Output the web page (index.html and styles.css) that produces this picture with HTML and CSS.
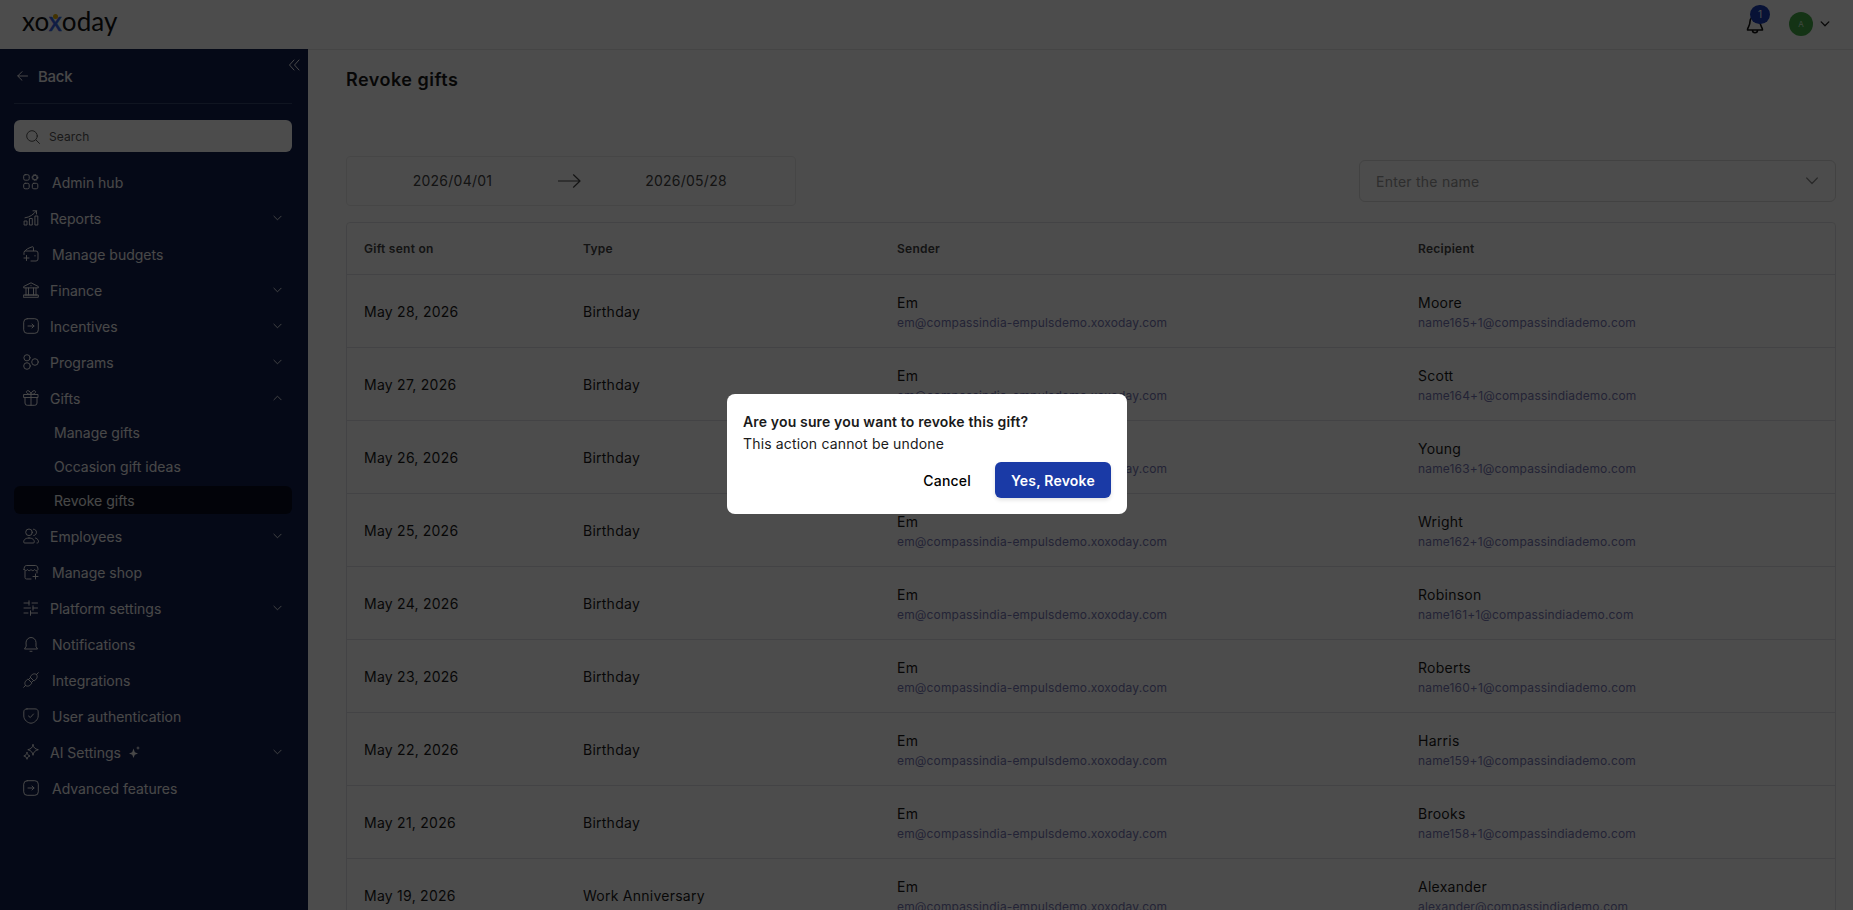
FILE: index.html
```
<!DOCTYPE html>
<html lang="en">
<head>
    <meta charset="UTF-8">
    <meta name="viewport" content="width=device-width, initial-scale=1.0">
    <title>Revoke gifts</title>
    <link rel="stylesheet" href="styles.css">
</head>
<body>
    <header class="topbar">
        <div class="logo">xo<span class="logo-x">x</span>oday</div>
        <div class="topbar-right">
            <div class="bell">
                <svg width="18" height="20" viewBox="0 0 18 20"><path d="M4 7.500a5 5 0 0 1 10 0c0 5 2.500 5.500 2.500 8.500h-15C1.500 13 4 12.500 4 7.500zM6.500 16.500a2.500 2.200 0 0 0 5 0" stroke-width="1.600"/></svg>
                <span class="badge">1</span>
            </div>
            <div class="avatar">A</div>
            <svg class="chev-user" width="10" height="6" viewBox="0 0 10 6"><path d="M1.200 .9 5 4.700 8.800 .9" stroke-width="1.300"/></svg>
        </div>
    </header>
    <div class="layout">
        <aside class="sidebar">
            <svg class="collapse" width="12" height="12" viewBox="0 0 12 12"><path d="M6 1 1.500 6 6 11M11 1 6.500 6 11 11"/></svg>
            <a class="back"><svg width="11" height="10" viewBox="0 0 11 10"><path d="M10.500 5H1M5 .7.7 5 5 9.300"/></svg><span>Back</span></a>
            <div class="search">
                <svg width="14" height="14" viewBox="0 0 14 14"><circle cx="6" cy="6" r="5.300"/><path d="m10 10 3.500 3.500"/></svg>
                <span>Search</span>
            </div>
            <nav class="menu" id="menu"></nav>
        </aside>
        <main class="content">
            <h1>Revoke gifts</h1>
            <div class="filters">
                <div class="date-range">
                    <span>2026/04/01</span>
                    <svg width="23" height="14" viewBox="0 0 23 14"><path d="M.5 7H22M15.500 .8 22 7l-6.500 6.200" stroke-width="1.200"/></svg>
                    <span>2026/05/28</span>
                </div>
                <div class="name-select">
                    <span>Enter the name</span>
                    <svg width="12" height="8" viewBox="0 0 12 8"><path d="M.7 1 6 6.500 11.300 1" stroke-width="1.200"/></svg>
                </div>
            </div>
            <table class="gift-table">
                <thead>
                    <tr>
                        <th class="col-date">Gift sent on</th>
                        <th class="col-type">Type</th>
                        <th class="col-sender">Sender</th>
                        <th>Recipient</th>
                    </tr>
                </thead>
                <tbody id="giftRows"></tbody>
            </table>
        </main>
    </div>
    <div class="overlay">
        <div class="modal">
            <h2>Are you sure you want to revoke this gift?</h2>
            <p>This action cannot be undone</p>
            <div class="modal-actions">
                <button class="btn-cancel">Cancel</button>
                <button class="btn-revoke">Yes, Revoke</button>
            </div>
        </div>
    </div>
    <script src="script.js"></script>
</body>
</html>
```

FILE: styles.css
```
* {
    box-sizing: border-box;
}

body {
    margin: 0;
    height: 100vh;
    overflow: hidden;
    background-color: #fff;
    color: #1a1a1a;
    font-family: Inter, sans-serif;
    font-size: 14px;
}

svg {
    display: block;
    flex: none;
    fill: none;
    stroke: currentColor;
    stroke-linecap: round;
    stroke-linejoin: round;
}

.topbar {
    display: flex;
    justify-content: space-between;
    align-items: center;
    height: 49px;
    padding: 0 23px 0 22px;
}

.logo {
    font-family: Lato, sans-serif;
    font-size: 26px;
    line-height: 40px;
    letter-spacing: 0.1px;
    padding-bottom: 8px;
    color: #111;
}

.logo-x {
    position: relative;
    color: #3762e4;
    -webkit-text-stroke: 0.5px #3762e4;
}

.logo-x::after {
    content: "";
    position: absolute;
    left: 4px;
    top: 9px;
    width: 5px;
    height: 5px;
    border-radius: 50%;
    background-color: #e0a800;
}

.topbar-right {
    display: flex;
    align-items: center;
    padding-bottom: 2px;
}

.bell {
    position: relative;
    margin-right: 25px;
    color: #111;
}

.badge {
    position: absolute;
    left: 4px;
    top: -9px;
    width: 20px;
    height: 19px;
    border-radius: 10px;
    background-color: #1b3cb5;
    color: #fff;
    font-size: 10px;
    line-height: 18px;
    text-align: center;
}

.avatar {
    width: 24px;
    height: 24px;
    margin-right: 7px;
    border-radius: 50%;
    background-color: #44aa49;
    color: #d5efd5;
    font-size: 8px;
    line-height: 24px;
    text-align: center;
}

.layout {
    display: flex;
    height: calc(100vh - 49px);
}

.sidebar {
    position: relative;
    flex: none;
    width: 308px;
    padding: 0 16px 0 14px;
    background-color: #131f4f;
    color: #f2f2f2;
}

.collapse {
    position: absolute;
    right: 8px;
    top: 10px;
}

.back {
    display: flex;
    align-items: center;
    gap: 10px;
    height: 55px;
    padding-left: 3px;
    border-bottom: 1px solid #38466f;
    font-size: 15px;
    font-weight: 500;
    letter-spacing: -0.3px;
}

.back span {
    padding-top: 1px;
}

.search {
    display: flex;
    align-items: center;
    gap: 9px;
    height: 32px;
    margin: 16px 0 12px;
    padding: 1px 0 0 12px;
    border-radius: 6px;
    background-color: #fff;
    color: #555;
    font-size: 12px;
    letter-spacing: 0.1px;
}

.menu-item {
    display: flex;
    align-items: center;
    height: 36px;
    padding: 0 10px 0 9px;
    font-size: 14px;
}

.menu-item .label {
    margin-left: 13px;
}

.menu-item.has-children .label {
    margin-left: 11px;
}

.menu-item .chevron {
    margin-left: auto;
}

.sparkle {
    margin-left: 8px;
    fill: currentColor;
    stroke: none;
}

.sub-item {
    height: 28px;
    margin: 2px 0 6px;
    padding-left: 40px;
    border-radius: 6px;
    font-size: 14px;
    line-height: 30px;
}

.sub-item.active {
    margin-bottom: 4px;
    background-color: #070d20;
}

.content {
    flex: 1;
    padding: 0 17px 0 38px;
    border-top: 1px solid #e8e8e8;
}

.content h1 {
    margin: 18px 0 0;
    font-size: 18px;
    font-weight: 600;
    line-height: 24px;
    letter-spacing: 0.5px;
}

.filters {
    display: flex;
    justify-content: space-between;
    align-items: center;
    margin-top: 64px;
    height: 49px;
}

.date-range {
    display: grid;
    grid-template-columns: 211px 24px 1fr;
    align-items: center;
    width: 450px;
    height: 50px;
    border: 1px solid #ececec;
    border-radius: 4px;
    color: #444;
    letter-spacing: 0.25px;
    text-align: center;
}

.date-range span:last-child {
    padding-right: 5px;
}

.name-select {
    display: flex;
    justify-content: space-between;
    align-items: center;
    width: 477px;
    height: 42px;
    padding: 0 17px 0 16px;
    border: 1px solid #dcdcdc;
    border-radius: 6px;
    color: #999;
    letter-spacing: 0.25px;
}

.name-select span {
    padding-top: 2px;
}

.name-select svg {
    color: #888;
}

.gift-table {
    width: 100%;
    margin-top: 17px;
    table-layout: fixed;
    border: 1px solid #e2e2e6;
    border-radius: 4px;
    border-spacing: 0;
    text-align: left;
}

.gift-table th {
    height: 52px;
    padding: 0 17px;
    border-bottom: 1px solid #e2e2e6;
    color: #444;
    font-size: 12px;
    font-weight: 600;
    letter-spacing: 0.25px;
}

.gift-table td {
    height: 73px;
    padding: 2px 17px 0;
    border-bottom: 1px solid #e2e2e6;
    letter-spacing: 0.25px;
}

.gift-table td:nth-child(-n+2) {
    padding: 0 17px;
}

.col-date {
    width: 219px;
}

.col-type {
    width: 314px;
}

.col-sender {
    width: 521px;
}

.person {
    margin-bottom: 1px;
    line-height: 20px;
}

.email {
    color: #7777b4;
    font-size: 12px;
    line-height: 18px;
    letter-spacing: 0.15px;
}

.overlay {
    position: fixed;
    inset: 0;
    display: flex;
    justify-content: center;
    align-items: center;
    padding: 0 0 2px 1px;
    background-color: rgba(0, 0, 0, 0.7);
}

.modal {
    width: 400px;
    height: 120px;
    padding: 17px 16px 16px;
    border-radius: 8px;
    background-color: #fff;
}

.modal h2 {
    margin: 0;
    font-size: 14px;
    font-weight: 600;
    line-height: 22px;
    letter-spacing: 0.15px;
}

.modal p {
    margin: 0;
    line-height: 22px;
    letter-spacing: 0.16px;
}

.modal-actions {
    display: flex;
    justify-content: flex-end;
    gap: 8px;
    margin-top: 7px;
}

.modal-actions button {
    height: 36px;
    padding: 0 16px;
    border: 0;
    border-radius: 6px;
    background-color: #fff;
    color: #000;
    font-family: inherit;
    font-size: 14px;
    font-weight: 500;
    letter-spacing: 0.2px;
    cursor: pointer;
}

.modal-actions .btn-revoke {
    width: 116px;
    padding: 0;
    background-color: #1a3aa6;
    color: #fff;
    font-weight: 600;
    box-shadow: 0 2px 4px rgba(0, 0, 0, 0.12);
}
```

FILE: script.js
```
const icons = {
    grid: '<rect x=".7" y=".7" width="5.500" height="5.500" rx="1.500"/><circle cx="12" cy="3.500" r="2.300"/><circle cx="12" cy="3.500" r="2.900" stroke-dasharray="1 1.200"/><rect x=".7" y="9.300" width="5.500" height="5.500" rx="1.500"/><rect x="9.300" y="9.300" width="5.500" height="5.500" rx="1.500"/>',
    chart: '<path d="M1.500 11h2.500v4H1.500zM6.800 8.500h2.500V15H6.800zM12.300 6h2.500v9h-2.500zM2 7.800c5-.6 8-3 11.500-7M10 .8h3.500V4"/>',
    wallet: '<path d="M1 8.500V6.500A1.500 1.500 0 0 1 2.500 5h10.500a2 2 0 0 1 2 2v6a2 2 0 0 1-2 2H8M1.500 5.500C3 3 6 2 9.500.7c1 0 1 1 1 4M1 12h5M3.500 9.500v5M12 9.500v.5"/>',
    bank: '<path d="M.7 5.500v-1L8 .8l7.300 3.700v1zM2 13h12M.7 15.300h14.600V13H.7zM3 6v7M5.500 6v7M10.500 6v7M13 6v7M8 3.500v.3"/>',
    box: '<rect x=".7" y=".7" width="14.600" height="14.600" rx="3.500"/><path d="M5 8h6M9 6l2 2-2 2"/>',
    programs: '<circle cx="4" cy="3.800" r="3.100"/><circle cx="4" cy="12" r="3.300"/><circle cx="12" cy="8" r="3.300"/>',
    gift: '<path d="M1 4.500h14v3H1zM2 7.500V13a2.300 2.300 0 0 0 2.300 2.300h7.400A2.300 2.300 0 0 0 14 13V7.500M8 4.500v10.800M8 4.500C3 4.500 2.500 1 4.500.7 6.500.5 8 2.500 8 4.500zM8 4.500c5 0 5.500-3.500 3.500-3.800C9.500.5 8 2.500 8 4.500z"/>',
    users: '<circle cx="6" cy="4.300" r="3.300"/><path d="M6 10c-4 0-5.300 2-5.300 4 0 .8.500 1 1 1h8.600c.5 0 1-.2 1-1 0-2-1.300-4-5.300-4zM10.500 1.200c4 0 4 6 .3 6.300M12.500 10c2.500.8 3 2.500 3 3.800 0 .8-.5 1.200-1.500 1.200"/>',
    shop: '<path d="M1 5.500c0-2 .8-4 2.300-4h9.400c1.500 0 2.300 2 2.300 4 0 1-3 1.500-3.500 0-.5 1.500-3 1.500-3.500 0-.5 1.500-3 1.500-3.500 0-.5 1.500-3.500 1-3.500 0zM2 7v6.500A1.500 1.500 0 0 0 3.500 15H8M14 7v2M12.500 10v5M10 12.500h5"/>',
    sliders: '<path d="M1 3h5M6 .8v4.400M9 3h5.500M1 8h6.500M10 8h4.500M10 5.800v4.400M1 13h4M7.500 10.800v4.500M7.500 13h7"/>',
    bell: '<path d="M3 6.500a5 5 0 0 1 10 0v4l1.500 2.500h-13L3 10.500zM7 15.300h2"/>',
    plug: '<path d="M.7 15.300 2.500 13.500M13.500 2.500 15.300.7M2.500 13.500c-2-3 .5-5 2.500-6.500l4 4c-1.500 2-3.500 4.500-6.500 2.500zM13.500 2.500c2 3-.5 5-2.500 6.500L7 5c1.500-2 3.500-4.500 6.500-2.500zM5.500 7.500 7 6M8.500 10.500 10 9"/>',
    shield: '<path d="M4 .9h8c2 0 3.200 1 3.200 3v4c0 4-4.200 7.300-7.200 7.300S.8 12 .8 8V3.900C.8 2 2 .9 4 .9zM5.500 8 7.300 9.500 10.500 6"/>',
    stars: '<path d="M10 .7c.5 3 2 4.300 5.300 5C12 6.500 10.500 8 10 11.300 9.500 8 8 6.500 4.800 5.700 8 5 9.500 3.700 10 .7zM4 8.500c.3 2 1.300 3 3 3.500-1.700.4-2.700 1.300-3 3.300-.4-2-1.300-2.900-3.200-3.300C2.700 11.500 3.600 10.500 4 8.500z"/>'
};

const menu = [
    { label: 'Admin hub', icon: 'grid' },
    { label: 'Reports', icon: 'chart', arrow: 'down' },
    { label: 'Manage budgets', icon: 'wallet' },
    { label: 'Finance', icon: 'bank', arrow: 'down' },
    { label: 'Incentives', icon: 'box', arrow: 'down' },
    { label: 'Programs', icon: 'programs', arrow: 'down' },
    { label: 'Gifts', icon: 'gift', arrow: 'up', children: ['Manage gifts', 'Occasion gift ideas', 'Revoke gifts'] },
    { label: 'Employees', icon: 'users', arrow: 'down' },
    { label: 'Manage shop', icon: 'shop' },
    { label: 'Platform settings', icon: 'sliders', arrow: 'down' },
    { label: 'Notifications', icon: 'bell' },
    { label: 'Integrations', icon: 'plug' },
    { label: 'User authentication', icon: 'shield' },
    { label: 'AI Settings', icon: 'stars', arrow: 'down', sparkle: true },
    { label: 'Advanced features', icon: 'box' }
];

const gifts = [
    ['May 28, 2026', 'Birthday', 'Moore', 'name165+1@compassindiademo.com'],
    ['May 27, 2026', 'Birthday', 'Scott', 'name164+1@compassindiademo.com'],
    ['May 26, 2026', 'Birthday', 'Young', 'name163+1@compassindiademo.com'],
    ['May 25, 2026', 'Birthday', 'Wright', 'name162+1@compassindiademo.com'],
    ['May 24, 2026', 'Birthday', 'Robinson', 'name161+1@compassindiademo.com'],
    ['May 23, 2026', 'Birthday', 'Roberts', 'name160+1@compassindiademo.com'],
    ['May 22, 2026', 'Birthday', 'Harris', 'name159+1@compassindiademo.com'],
    ['May 21, 2026', 'Birthday', 'Brooks', 'name158+1@compassindiademo.com'],
    ['May 19, 2026', 'Work Anniversary', 'Alexander', 'alexander@compassindiademo.com']
];

const arrows = { down: 'M1 1l4 4 4-4', up: 'M1 5l4-4 4 4' };

function renderMenu() {
    document.getElementById('menu').innerHTML = menu.map(item => `
        <div class="menu-item ${item.arrow ? 'has-children' : ''}">
            <svg width="16" height="16" viewBox="0 0 16 16">${icons[item.icon]}</svg>
            <span class="label">${item.label}</span>
            ${item.sparkle ? '<svg class="sparkle" width="11" height="12" viewBox="0 0 11 12"><path d="M4.500 2.500 5.800 6.200 9 7.500 5.800 8.800 4.500 12 3.200 8.800 0 7.500l3.200-1.300zM9 0l.6 1.400L11 2l-1.400.6L9 4l-.6-1.400L7 2l1.400-.6z"/></svg>' : ''}
            ${item.arrow ? `<svg class="chevron" width="9" height="6" viewBox="0 0 10 6"><path d="${arrows[item.arrow]}"/></svg>` : ''}
        </div>
        ${(item.children || []).map(child => `<div class="sub-item ${child === 'Revoke gifts' ? 'active' : ''}">${child}</div>`).join('')}
    `).join('');
}

function renderGifts() {
    document.getElementById('giftRows').innerHTML = gifts.map(([date, type, name, email]) => `
        <tr>
            <td>${date}</td>
            <td>${type}</td>
            <td><div class="person">Em</div><div class="email">em@compassindia-empulsdemo.xoxoday.com</div></td>
            <td><div class="person">${name}</div><div class="email">${email}</div></td>
        </tr>
    `).join('');
}

renderMenu();
renderGifts();
```
